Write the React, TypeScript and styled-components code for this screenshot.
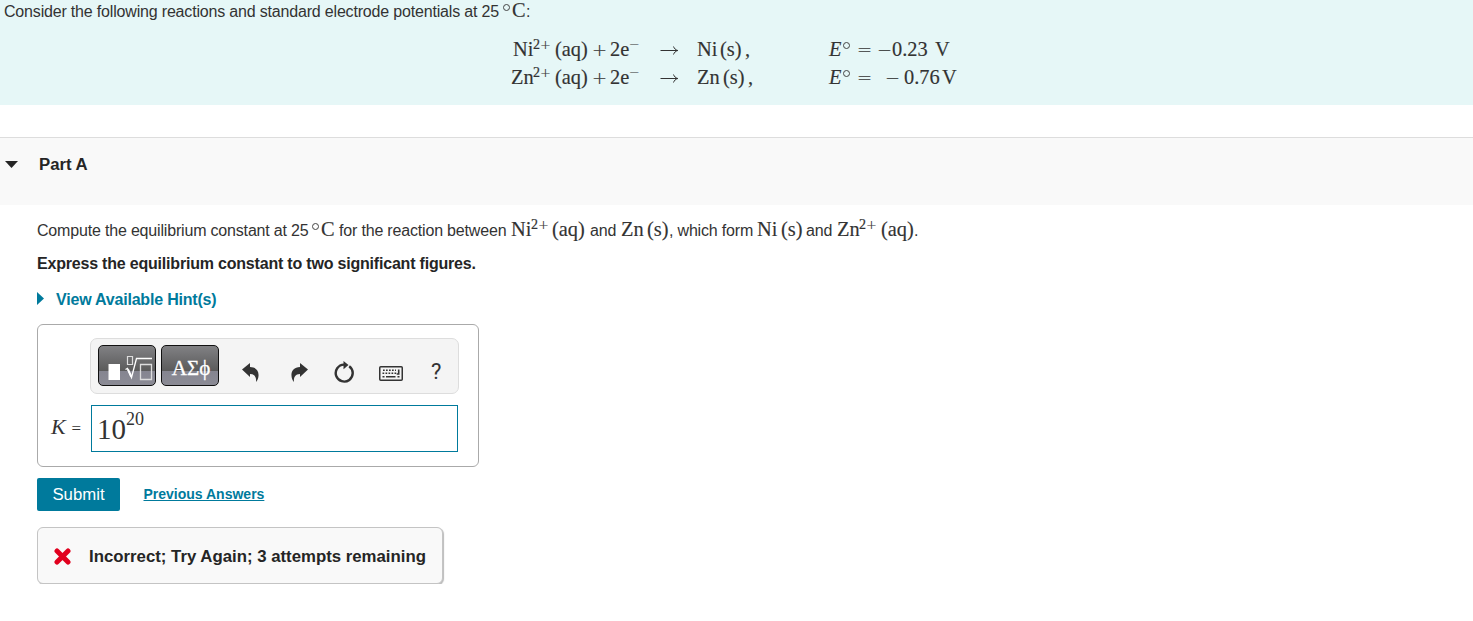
import React from "react";
import styled, { createGlobalStyle } from "styled-components";

const colors = {
    teal: "#007a9c",
    text: "#333",
    heading: "#252525",
    banner: "#e6f7f7",
    panel: "#f9f9f9",
    error: "#e1001e",
};

const sans = `"Liberation Sans", Arial, sans-serif`;
const serif = `"Liberation Serif", "Times New Roman", serif`;

const reactions = [
    {
        metal: "Ni",
        width: 20,
        stateGap: 4,
        potential: "0.23",
        gaps: { minus: 5, value: 0, unit: 10 },
    },
    {
        metal: "Zn",
        width: 22,
        stateGap: 5,
        potential: "0.76",
        gaps: { minus: 13, value: 4, unit: 5 },
    },
];

const Charge = () => (
    <Sup $width={17}>
        2<Plus>+</Plus>
    </Sup>
);

const Celsius = () => (
    <>
        <Degree />
        <Term $width={14} $before={2}>
            C
        </Term>
    </>
);

const Arrow = () => (
    <svg width="19" height="11" viewBox="0 0 19 11" fill="none" stroke="#333">
        <path d="M0.5 5.5H17.5M13.5 1.5C14.2 3.5 15.6 4.9 17.8 5.5C15.6 6.1 14.2 7.5 13.5 9.5" />
    </svg>
);

const App: React.FC = () => (
    <>
        <GlobalStyle />
        <Banner>
            <Intro>
                <Run $width={495}>
                    Consider the following reactions and standard electrode
                    potentials at 25
                </Run>
                <Celsius />:
            </Intro>
            <Equations>
                {reactions.map(({ metal, width, stateGap, potential, gaps }) => (
                    <React.Fragment key={metal}>
                        <Reactant>
                            <Term $width={width}>{metal}</Term>
                            <Charge />
                            <Term $width={33} $before={5}>
                                (aq)
                            </Term>
                            <Op $width={15} $before={4}>
                                +
                            </Op>
                            <Term $width={19} $before={3}>
                                2e
                            </Term>
                            <Sup $width={10}>
                                <Plus>−</Plus>
                            </Sup>
                        </Reactant>
                        <ArrowCell>
                            <Arrow />
                        </ArrowCell>
                        <div>
                            <Term $width={width - 1}>{metal}</Term>
                            <Term $width={22} $before={stateGap}>
                                (s)
                            </Term>
                            <Term $width={6} $before={3}>
                                ,
                            </Term>
                        </div>
                        <div>
                            <Variable>E</Variable>
                            <Degree />
                            <Op $width={15} $before={7}>
                                =
                            </Op>
                            <Op $width={15} $before={gaps.minus}>
                                −
                            </Op>
                            <Term $width={33} $before={gaps.value}>
                                {potential}
                            </Term>
                            <Term $width={15} $before={gaps.unit}>
                                V
                            </Term>
                        </div>
                    </React.Fragment>
                ))}
            </Equations>
        </Banner>

        <PartHeader>
            <Caret />
            Part A
        </PartHeader>

        <Content>
            <Question>
                <Run $width={271}>Compute the equilibrium constant at 25</Run>
                <Celsius />
                <Run $width={167} $before={4}>
                    for the reaction between
                </Run>
                <Term $width={20} $before={5}>
                    Ni
                </Term>
                <Charge />
                <Term $width={33} $before={4}>
                    (aq)
                </Term>
                <Run $width={27} $before={5}>
                    and
                </Run>
                <Term $width={22} $before={4}>
                    Zn
                </Term>
                <Term $width={22} $before={4}>
                    (s)
                </Term>
                <Run $width={83}>, which form</Run>
                <Term $width={20} $before={5}>
                    Ni
                </Term>
                <Term $width={22} $before={4}>
                    (s)
                </Term>
                <Run $width={27} $before={3}>
                    and
                </Run>
                <Term $width={22} $before={4}>
                    Zn
                </Term>
                <Charge />
                <Term $width={33} $before={5}>
                    (aq)
                </Term>
                .
            </Question>
            <Instruction>
                Express the equilibrium constant to two significant figures.
            </Instruction>
            <Hints>
                <HintCaret />
                View Available Hint(s)
            </Hints>

            <AnswerBox>
                <Toolbar>
                    <PaletteButton aria-label="Templates">
                        <svg width="58" height="41" viewBox="0 0 58 41" fill="none" stroke="#fff">
                            <path d="M10.5 19H22v16H10.5z" fill="#fff" stroke="none" />
                            <path d="M29.5 11.5h5v8h-5z" stroke="#ddd" strokeWidth="1.2" />
                            <path d="M27.5 24.500l2-1 4 9L38.500 13.500H54" strokeWidth="1.3" />
                            <path d="M30 24.500l3.200 7" strokeWidth="2" />
                            <path d="M42.500 19.500h11v15h-11z" stroke="#ddd" strokeWidth="1.300" />
                        </svg>
                    </PaletteButton>
                    <PaletteButton aria-label="Symbols">ΑΣϕ</PaletteButton>
                    <Tools>
                        <ToolButton $gap={32} aria-label="Undo">
                            <svg width="17" height="19" viewBox="0 0 17 19" fill="#333">
                                <path d="M0 6.5L8 0v4c5.5 0 9 3.5 8.5 9-.2 2.5-1 4.2-2.5 6 .6-5-1.5-8-6-8v3z" />
                            </svg>
                        </ToolButton>
                        <ToolButton $gap={26} aria-label="Redo">
                            <svg width="17" height="19" viewBox="0 0 17 19" fill="#333">
                                <path d="M17 6.5L9 0v4C3.5 4 0 7.5.5 13c.2 2.5 1 4.2 2.5 6-.6-5 1.5-8 6-8v3z" />
                            </svg>
                        </ToolButton>
                        <ToolButton $gap={25} aria-label="Reset">
                            <svg width="20" height="22" viewBox="0 0 20 22" fill="none">
                                <path d="M15.2 5.2A8.5 8.5 0 1 1 10 3.6" stroke="#333" strokeWidth="2.4" />
                                <path d="M9.5 0l5 4-5 4.3z" fill="#333" />
                            </svg>
                        </ToolButton>
                        <ToolButton $gap={28} $top={3} aria-label="Keyboard">
                            <svg width="24" height="15" viewBox="0 0 24 15" fill="none" stroke="#333">
                                <rect x=".75" y=".75" width="22.5" height="13.5" rx="1" strokeWidth="1.5" />
                                <path d="M4 4.2h13M3.5 7.2h14" strokeWidth="1.6" strokeDasharray="1.7 1.3" />
                                <path d="M3.5 10.8h2M7 10.8h9.5M18.5 10.8h2M19.7 3.4v4.6h-2" strokeWidth="1.6" />
                            </svg>
                        </ToolButton>
                        <Help aria-label="Help">?</Help>
                    </Tools>
                </Toolbar>
                <AnswerRow>
                    <AnswerLabel>
                        <i>K</i>
                        <span>=</span>
                    </AnswerLabel>
                    <AnswerField>
                        10<Exponent>20</Exponent>
                    </AnswerField>
                </AnswerRow>
            </AnswerBox>

            <Actions>
                <Submit>Submit</Submit>
                <PreviousLink href="#">Previous Answers</PreviousLink>
            </Actions>

            <Feedback>
                <svg width="17" height="17" viewBox="0 0 17 17" fill="none">
                    <path d="M3 3l11 11M14 3L3 14" stroke={colors.error} strokeWidth="5" strokeLinecap="round" />
                </svg>
                <Message>Incorrect; Try Again; 3 attempts remaining</Message>
            </Feedback>
        </Content>
    </>
);

const GlobalStyle = createGlobalStyle`
    * {
        box-sizing: border-box;
    }

    body {
        margin: 0;
        background: #fff;
        color: ${colors.text};
        font: 16px/22px ${sans};
    }

    svg {
        display: block;
    }
`;

const Run = styled.span<{ $width: number; $before?: number }>`
    display: inline-block;
    width: ${({ $width }) => $width}px;
    margin-left: ${({ $before = 0 }) => $before}px;
    letter-spacing: -0.18px;
    white-space: nowrap;
`;

const Term = styled(Run)`
    font-family: ${serif};
    font-size: 20.4px;
    letter-spacing: 0;
    line-height: 22px;
    -webkit-text-stroke: 0.15px ${colors.text};
`;

const Op = styled(Run)`
    font-family: "DejaVu Sans", sans-serif;
    font-size: 18px;
    font-weight: 200;
    line-height: 22px;
    -webkit-text-stroke: 0.2px ${colors.text};
`;

const Variable = styled.span`
    display: inline-block;
    width: 14px;
    font: italic 20.4px/22px ${serif};
    -webkit-text-stroke: 0.15px ${colors.text};
`;

const Sup = styled.span<{ $width: number }>`
    display: inline-block;
    width: ${({ $width }) => $width}px;
    font: 14px/10px ${serif};
    vertical-align: 7px;
    white-space: nowrap;
    -webkit-text-stroke: 0.2px ${colors.text};
`;

const Plus = styled.span`
    font: 200 13px/10px "DejaVu Sans", sans-serif;
`;

const Degree = styled.span`
    display: inline-block;
    width: 7px;
    height: 7px;
    border: 1px solid #444;
    border-radius: 50%;
    vertical-align: 7px;
`;

const Banner = styled.section`
    height: 105px;
    padding-top: 0.1px;
    background: ${colors.banner};
`;

const Intro = styled.div`
    height: 37px;
    margin-top: -1px;
    padding-left: 4px;
    white-space: nowrap;

    ${Degree} {
        margin-left: 4px;
        vertical-align: 6px;
    }
`;

const Equations = styled.div`
    display: grid;
    grid-template-columns: 128px 58px 132px 140px;
    grid-auto-rows: 28px;
    align-items: center;
    padding-left: 511px;
    white-space: nowrap;
`;

const Reactant = styled.div`
    text-align: right;

    span {
        text-align: left;
    }
`;

const ArrowCell = styled.div`
    padding-left: 21px;
`;

const PartHeader = styled.header`
    display: flex;
    align-items: flex-start;
    height: 68px;
    margin-top: 32px;
    padding: 16px 0 0 5px;
    border-top: 1px solid #ddd;
    background: ${colors.panel};
    color: ${colors.heading};
    font-size: 16.75px;
    font-weight: bold;
`;

const Caret = styled.span`
    width: 13px;
    height: 7px;
    margin: 7px 21px 0 0;
    background: ${colors.heading};
    clip-path: polygon(0 0, 100% 0, 50% 100%);
`;

const Content = styled.main`
    padding: 13px 0 0 37px;
`;

const Question = styled.div`
    height: 35px;
    white-space: nowrap;

    ${Degree} {
        margin-left: 4px;
        vertical-align: 6px;
    }
`;

const Instruction = styled.div`
    color: ${colors.heading};
    font-weight: bold;
    letter-spacing: -0.2px;
`;

const Hints = styled.div`
    display: flex;
    align-items: center;
    margin-top: 14px;
    color: ${colors.teal};
    font-weight: bold;
    letter-spacing: -0.2px;
`;

const HintCaret = styled.span`
    width: 7px;
    height: 13px;
    margin: -3px 12px 0 0;
    background: ${colors.teal};
    clip-path: polygon(0 0, 100% 50%, 0 100%);
`;

const AnswerBox = styled.div`
    width: 442px;
    height: 143px;
    margin-top: 13px;
    padding: 13px 19px 0 13px;
    border: 1px solid #aaa;
    border-radius: 6px;
`;

const Toolbar = styled.div`
    display: flex;
    width: 369px;
    height: 56px;
    margin-left: 39px;
    padding: 6px 7px;
    border: 1px solid #ddd;
    border-radius: 7px;
    background: #f4f4f4;
`;

const PaletteButton = styled.button`
    display: flex;
    align-items: center;
    justify-content: center;
    width: 58px;
    height: 41px;
    margin-right: 5px;
    padding: 5px 0 0 2px;
    border: 1px solid #111;
    border-radius: 5px;
    background: linear-gradient(#818184, #5b5b5b 63%, #858590 64%, #8b8b95);
    color: #fff;
    font: 21px ${serif};
    -webkit-text-stroke: 0.3px #fff;

    svg {
        margin: -5px 0 0 -2px;
        flex-shrink: 0;
    }
`;

const Tools = styled.div`
    display: flex;
    align-items: center;
    padding: 12px 0 0 18px;
`;

const ToolButton = styled.button<{ $gap: number; $top?: number }>`
    margin: ${({ $top = 0 }) => $top}px ${({ $gap }) => $gap}px 0 0;
    padding: 0;
    border: 0;
    background: none;
`;

const Help = styled.button`
    padding: 0;
    border: 0;
    background: none;
    color: ${colors.text};
    font: 22px/22px Roboto, sans-serif;
`;

const AnswerRow = styled.div`
    display: flex;
    align-items: center;
    margin-top: 11px;
`;

const AnswerLabel = styled.div`
    display: flex;
    align-items: baseline;
    justify-content: space-between;
    width: 30px;
    margin: -1px 10px 0 0;
    font: 17px/22px ${serif};

    i {
        font-size: 22px;
    }
`;

const AnswerField = styled.div`
    width: 367px;
    height: 47px;
    padding: 7px 5px;
    border: 1px solid ${colors.teal};
    font: 29px/32px ${serif};
`;

const Exponent = styled.span`
    font-size: 18px;
    line-height: 0;
    vertical-align: 14px;
`;

const Actions = styled.div`
    display: flex;
    align-items: center;
    margin-top: 11px;
`;

const Submit = styled.button`
    width: 83px;
    height: 33px;
    padding: 0;
    border: 0;
    border-radius: 2px;
    background: ${colors.teal};
    color: #fff;
    font: 16.75px ${sans};
`;

const PreviousLink = styled.a`
    margin: -2px 0 0 23.5px;
    color: ${colors.teal};
    font-size: 14px;
    font-weight: bold;
`;

const Feedback = styled.div`
    display: flex;
    align-items: center;
    gap: 18px;
    width: 406px;
    height: 57px;
    margin-top: 16px;
    padding: 1px 0 0 16px;
    border: 1px solid #c4c4c4;
    border-radius: 6px;
    background: ${colors.panel};
    box-shadow: 1px 1px 1px #bbb;
    color: ${colors.heading};
    font-size: 16.8px;
    font-weight: bold;
    white-space: nowrap;
`;

const Message = styled.span`
    padding-top: 1px;
`;

export default App;
